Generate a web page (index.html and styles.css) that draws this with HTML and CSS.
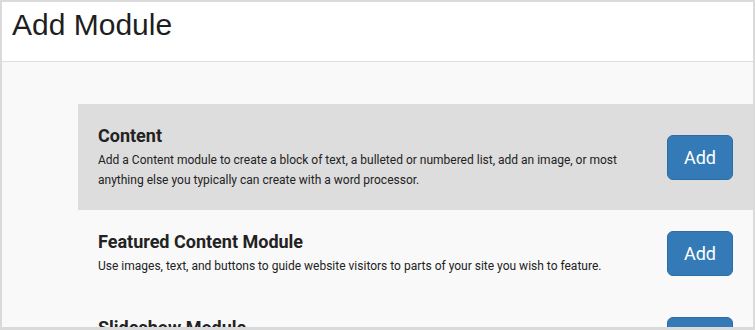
FILE: index.html
```html
<!DOCTYPE html>
<html lang="en">
<head>
  <meta charset="UTF-8">
  <meta name="viewport" content="width=device-width, initial-scale=1.0">
  <title>Add Module</title>
  <link rel="stylesheet" href="styles.css">
</head>
<body>

<div class="modal">
  <!-- Header -->
  <div class="modal-header">
    <h1 class="modal-title">Add Module</h1>
  </div>

  <!-- Module list -->
  <div class="modal-body">
    <div class="module active">
      <div class="module-info">
        <div class="module-name">Content</div>
        <div class="module-desc">Add a Content module to create a block of text, a bulleted or numbered list, add an image, or most anything else you typically can create with a word processor.</div>
      </div>
      <button class="btn-add">Add</button>
    </div>

    <div class="module">
      <div class="module-info">
        <div class="module-name">Featured Content Module</div>
        <div class="module-desc">Use images, text, and buttons to guide website visitors to parts of your site you wish to feature.</div>
      </div>
      <button class="btn-add">Add</button>
    </div>

    <div class="module">
      <div class="module-info">
        <div class="module-name">Slideshow Module</div>
        <div class="module-desc">Show a rotating set of images with captions and links to other pages.</div>
      </div>
      <button class="btn-add">Add</button>
    </div>
  </div>
</div>

</body>
</html>
```

FILE: styles.css
```css
html, body {
  height: 100%;
}
body {
  margin: 0;
  padding: 2px 2px 3px 2px;
  box-sizing: border-box;
  background-color: #dadada;
  font-family: Roboto, "Liberation Sans", Arial, sans-serif;
  overflow: hidden;
}
.modal {
  height: 100%;
  background: #f9f9f9;
  overflow: hidden;
}
.modal-header {
  background: #fff;
  height: 60px;
  border-bottom: 1px solid #dddddd;
  padding: 5px 10px 0;
  box-sizing: border-box;
}
.modal-title {
  margin: 0;
  font-family: "Liberation Sans", Arial, sans-serif;
  font-size: 30px;
  font-weight: normal;
  line-height: 36px;
  color: #1e1e1e;
}
.modal-body {
  padding: 42px 0 0 76px;
}
.module {
  display: flex;
  align-items: center;
  gap: 30px;
  padding: 20px;
}
.module.active {
  background-color: #dddddd;
}
.module-info {
  flex: 1;
}
.module-name {
  font-size: 18px;
  font-weight: bold;
  line-height: 24px;
  color: #222;
  margin-bottom: 2px;
}
.module-desc {
  font-size: 12px;
  line-height: 20px;
  color: #222;
}
.btn-add {
  font-family: Roboto, "Liberation Sans", Arial, sans-serif;
  font-size: 18px;
  line-height: 23px;
  padding: 10px 16px;
  color: #fff;
  background-color: #337ab7;
  border: 1px solid #2e6da4;
  border-radius: 6px;
  cursor: pointer;
}
```
